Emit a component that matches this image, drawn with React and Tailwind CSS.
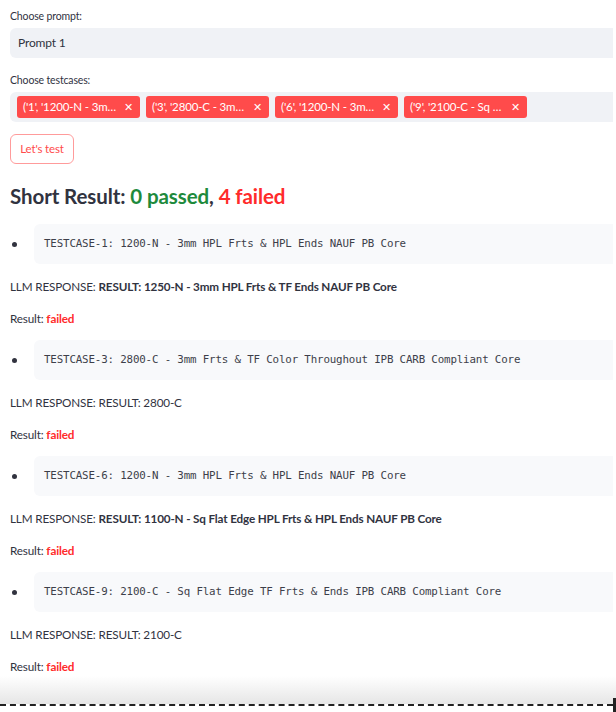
const TAGS = ["('1', '1200-N - 3m…", "('3', '2800-C - 3m…", "('6', '1200-N - 3m…", "('9', '2100-C - Sq …"];

const CASES = [
  {
    code: "TESTCASE-1: 1200-N - 3mm HPL Frts & HPL Ends NAUF PB Core",
    response: "RESULT: 1250-N - 3mm HPL Frts & TF Ends NAUF PB Core",
    bold: true,
  },
  {
    code: "TESTCASE-3: 2800-C - 3mm Frts & TF Color Throughout IPB CARB Compliant Core",
    response: "RESULT: 2800-C",
    bold: false,
  },
  {
    code: "TESTCASE-6: 1200-N - 3mm HPL Frts & HPL Ends NAUF PB Core",
    response: "RESULT: 1100-N - Sq Flat Edge HPL Frts & HPL Ends NAUF PB Core",
    bold: true,
  },
  {
    code: "TESTCASE-9: 2100-C - Sq Flat Edge TF Frts & Ends IPB CARB Compliant Core",
    response: "RESULT: 2100-C",
    bold: false,
  },
];

function Tag({ label }) {
  return (
    <span className="flex h-[22px] w-[123px] items-center justify-between rounded-[3px] bg-[#ff4b4b] pl-[6px] pr-[7px] text-[11.5px] text-white">
      <span className="whitespace-nowrap">{label}</span>
      <span className="text-[11px]">✕</span>
    </span>
  );
}

function CaseBlock({ item }) {
  return (
    <div className="flex flex-col">
      <div className="flex items-center">
        <span className="ml-[2px] mr-[17px] h-[5px] w-[5px] rounded-full bg-[#31333f]" />
        <div className="flex h-[40px] flex-1 items-center rounded-l-[6px] bg-[#f8f9fb] pl-[10px] font-['DejaVu_Sans_Mono',monospace] text-[10.8px] whitespace-pre text-[#3d3f4a]">
          {item.code}
        </div>
      </div>
      <p className="mt-[14px] h-[16px] leading-[16px]">
        LLM RESPONSE: {item.bold ? <span className="font-bold">{item.response}</span> : item.response}
      </p>
      <p className="mt-[16px] h-[16px] leading-[16px]">
        Result: <span className="font-bold text-[#ff2b2b]">failed</span>
      </p>
    </div>
  );
}

export default function App() {
  return (
    <div className="relative h-[712px] w-[616px] overflow-hidden bg-white font-['Lato',sans-serif] text-[11.7px] tracking-[-0.15px] text-[#31333f]">
      <div className="flex w-[613px] flex-col pl-[10px]">
        <label className="mt-[9px] h-[14px] text-[10.5px] leading-[14px]">Choose prompt:</label>
        <div className="mt-[5px] flex h-[30px] items-center rounded-l-[6px] bg-[#f0f2f6] pl-[8px] text-[12px]">
          Prompt 1
        </div>

        <label className="mt-[15px] h-[14px] text-[10.5px] leading-[14px]">Choose testcases:</label>
        <div className="mt-[5px] flex h-[30px] items-center gap-[6px] rounded-l-[6px] bg-[#f0f2f6] pl-[7px]">
          {TAGS.map((t) => (
            <Tag key={t} label={t} />
          ))}
        </div>

        <button className="mt-[12px] flex h-[30px] w-[64px] items-center justify-center rounded-[6px] border border-[#ff9b9b] text-[11.5px] text-[#ff4b4b]">
          Let's test
        </button>

        <h2 className="mt-[18px] h-[28px] text-[20.5px] leading-[28px] font-bold tracking-[-0.1px]">
          Short Result: <span className="text-[#1e8a3c]">0 passed</span>,{" "}
          <span className="text-[#ff2b2b]">4 failed</span>
        </h2>

        <div className="mt-[14px] flex flex-col gap-[14px]">
          {CASES.map((c) => (
            <CaseBlock key={c.code} item={c} />
          ))}
        </div>
      </div>

      <div className="absolute left-0 top-[676px] h-[28px] w-full bg-gradient-to-b from-white to-[#e6e6e6]" />
      <div className="absolute left-0 top-[704px] w-[613px] border-t-[2px] border-dashed border-[#222]" />
      <div className="absolute left-[613px] top-[698px] h-[14px] w-[3px] bg-[#222]" />
    </div>
  );
}
